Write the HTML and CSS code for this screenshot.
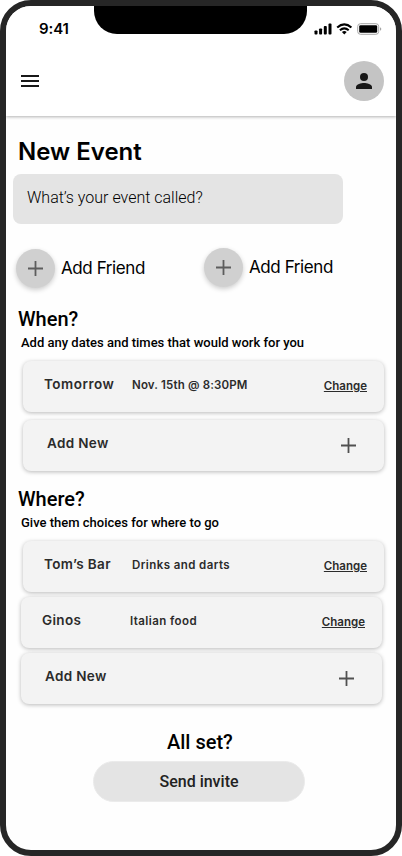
FILE: index.html
```html
<!DOCTYPE html>
<html lang="en">
<head>
<meta charset="utf-8">
<title>New Event</title>
<link rel="stylesheet" href="styles.css">
</head>
<body>
<div class="phone">
  <header class="header">
    <div class="notch"></div>
    <div class="status">
      <span class="time">9:41</span>
      <svg class="status-icons" width="68" height="12" viewBox="0 0 68 12">
        <rect x=".5" y="7.4" width="3" height="4" rx=".9"/>
        <rect x="5.1" y="5.4" width="3" height="6" rx=".9"/>
        <rect x="9.8" y="3" width="3" height="8.4" rx=".9"/>
        <rect x="14.5" y=".6" width="3" height="10.8" rx=".9"/>
        <path d="M23.2 4.5Q30.3-1.8 37.4 4.5" fill="none" stroke="#000" stroke-width="2.2"/>
        <path d="M25.9 7.3Q30.3 3.4 34.7 7.3" fill="none" stroke="#000" stroke-width="2"/>
        <path d="M27.9 9Q30.3 7.1 32.7 9L30.3 11.5Z"/>
        <rect x="43.7" y=".7" width="21" height="10.6" rx="2.8" fill="none" stroke="#a5a5a5"/>
        <rect x="45.2" y="2.2" width="18" height="7.6" rx="1.4"/>
        <path d="M66 4.2Q67.3 4.7 67.3 6T66 7.8Z" fill="#a5a5a5"/>
      </svg>
    </div>
    <div class="toolbar">
      <svg class="menu" width="18" height="12" viewBox="0 0 18 12"><path d="M0 0h18v2H0zM0 5h18v2H0zM0 10h18v2H0z"/></svg>
      <div class="avatar">
        <svg width="16" height="16" viewBox="0 0 16 16"><circle cx="8" cy="4" r="4"/><path d="M0 16v-2c0-2.7 5.3-4 8-4s8 1.3 8 4v2z"/></svg>
      </div>
    </div>
  </header>
  <main>
    <h1>New Event</h1>
    <div class="field">What’s your event called?</div>
    <div class="friends">
      <div class="friend">
        <span class="circle"><svg width="15" height="15" viewBox="0 0 15 15"><path d="M6.6 0h1.8v6.6H15v1.8H8.4V15H6.6V8.4H0V6.6h6.6z"/></svg></span>
        <span>Add Friend</span>
      </div>
      <div class="friend second">
        <span class="circle"><svg width="15" height="15" viewBox="0 0 15 15"><path d="M6.6 0h1.8v6.6H15v1.8H8.4V15H6.6V8.4H0V6.6h6.6z"/></svg></span>
        <span>Add Friend</span>
      </div>
    </div>
    <section class="when">
      <h2>When?</h2>
      <p>Add any dates and times that would work for you</p>
      <div class="cards">
        <div class="card"><span class="name tomorrow">Tomorrow</span><span class="detail date">Nov. 15th @ 8:30PM</span><span class="change">Change</span></div>
        <div class="card add"><span class="name">Add New</span><svg class="plus" width="15" height="15" viewBox="0 0 15 15"><path d="M6.6 0h1.8v6.6H15v1.8H8.4V15H6.6V8.4H0V6.6h6.6z"/></svg></div>
      </div>
    </section>
    <section class="where">
      <h2>Where?</h2>
      <p>Give them choices for where to go</p>
      <div class="cards">
        <div class="card"><span class="name">Tom’s Bar</span><span class="detail">Drinks and darts</span><span class="change">Change</span></div>
        <div class="card"><span class="name">Ginos</span><span class="detail">Italian food</span><span class="change">Change</span></div>
        <div class="card add"><span class="name">Add New</span><svg class="plus" width="15" height="15" viewBox="0 0 15 15"><path d="M6.6 0h1.8v6.6H15v1.8H8.4V15H6.6V8.4H0V6.6h6.6z"/></svg></div>
      </div>
    </section>
    <footer>
      <h2>All set?</h2>
      <div class="send">Send invite</div>
    </footer>
  </main>
</div>
</body>
</html>
```
FILE: styles.css
```css
* { box-sizing: border-box; margin: 0; }
body { background: #fff; font-family: Roboto, sans-serif; color: #000; }
svg { display: block; }
span { white-space: nowrap; }
.phone { position: relative; width: 402px; height: 856px; border: 6px solid #262626; border-radius: 31px; background: #fefefe; overflow: hidden; }
.header { height: 110px; background: #fff; box-shadow: 0 1px 3px rgba(0,0,0,.3); }
.notch { position: absolute; top: 0; left: 88px; width: 213px; height: 28px; background: #000; border-radius: 0 0 23px 23px; }
.status { display: flex; justify-content: space-between; height: 40px; padding: 17px 15px 0 33px; }
.status-icons { margin-right: -1px; }
.time { font: 600 15px/12px Inter, sans-serif; letter-spacing: -.1px; }
.toolbar { display: flex; justify-content: space-between; align-items: center; padding: 15px 12px 0 15px; }
.menu, .avatar { fill: #181818; }
.avatar { display: flex; align-items: center; justify-content: center; width: 40px; height: 40px; border-radius: 50%; background: #c4c4c4; }
h1 { padding: 21px 0 0 12px; font: 600 24px/30px Inter, sans-serif; }
.field { width: 330px; height: 50px; margin: 7px 0 0 7px; padding-left: 14px; border-radius: 8px; background: #e4e4e4; font-size: 16px; font-weight: 300; line-height: 47px; }
.friends { display: flex; padding: 25px 0 0 10px; height: 80px; }
.friend { display: flex; align-items: center; gap: 6px; width: 188px; height: 39px; font: 400 17px/39px Inter, sans-serif; letter-spacing: -.41px; }
.second { margin-top: -1px; }
.circle { display: flex; align-items: center; justify-content: center; width: 39px; height: 39px; border-radius: 50%; background: #d0d0d0; box-shadow: 0 2px 5px rgba(0,0,0,.2); fill: #5d5d5d; }
h2 { font-size: 20px; line-height: 24px; font-weight: 500; }
section { padding-left: 12px; }
.when { padding-top: 3px; height: 180px; }
.where { padding-top: 3px; height: 223px; }
section p { margin: 4px 0 0 3px; font-size: 13px; line-height: 16px; font-weight: 500; }
.cards { display: flex; flex-direction: column; margin: 10px 0 0 5px; }
.card { display: flex; align-items: center; width: 361px; height: 51px; padding: 0 17px 3px 21px; border-radius: 8px; background: #f3f3f3; box-shadow: 0 1px 4px rgba(0,0,0,.28); color: #2b2b2b; font-family: Inter, sans-serif; font-weight: 600; line-height: 18px; }
.card + .card { margin-top: 5px; }
.when .card + .card { margin-top: 8px; }
.where .card + .card { margin-left: -2px; }
.name { flex: 0 0 88px; font-size: 13.5px; letter-spacing: .35px; margin-top: -2px; }
.tomorrow { letter-spacing: .5px; }
.detail { flex: 1; font-size: 11.5px; letter-spacing: .42px; }
.date { letter-spacing: .17px; }
.change { padding-top: 2px; font-size: 11.5px; text-decoration: underline; text-decoration-thickness: 1px; text-underline-offset: 1px; }
.add { padding-left: 24px; padding-right: 28px; justify-content: space-between; }
.plus { fill: #505050; margin-top: 2px; }
footer { display: flex; flex-direction: column; align-items: center; padding-top: 23px; }
footer h2 { width: 68px; white-space: nowrap; }
.send { width: 212px; height: 41px; margin: 7px 4px 0 0; border: 1px solid #ebebeb; border-radius: 21px; background: #e4e4e4; color: #222; text-align: center; font-size: 16px; line-height: 40px; font-weight: 500; }
```
